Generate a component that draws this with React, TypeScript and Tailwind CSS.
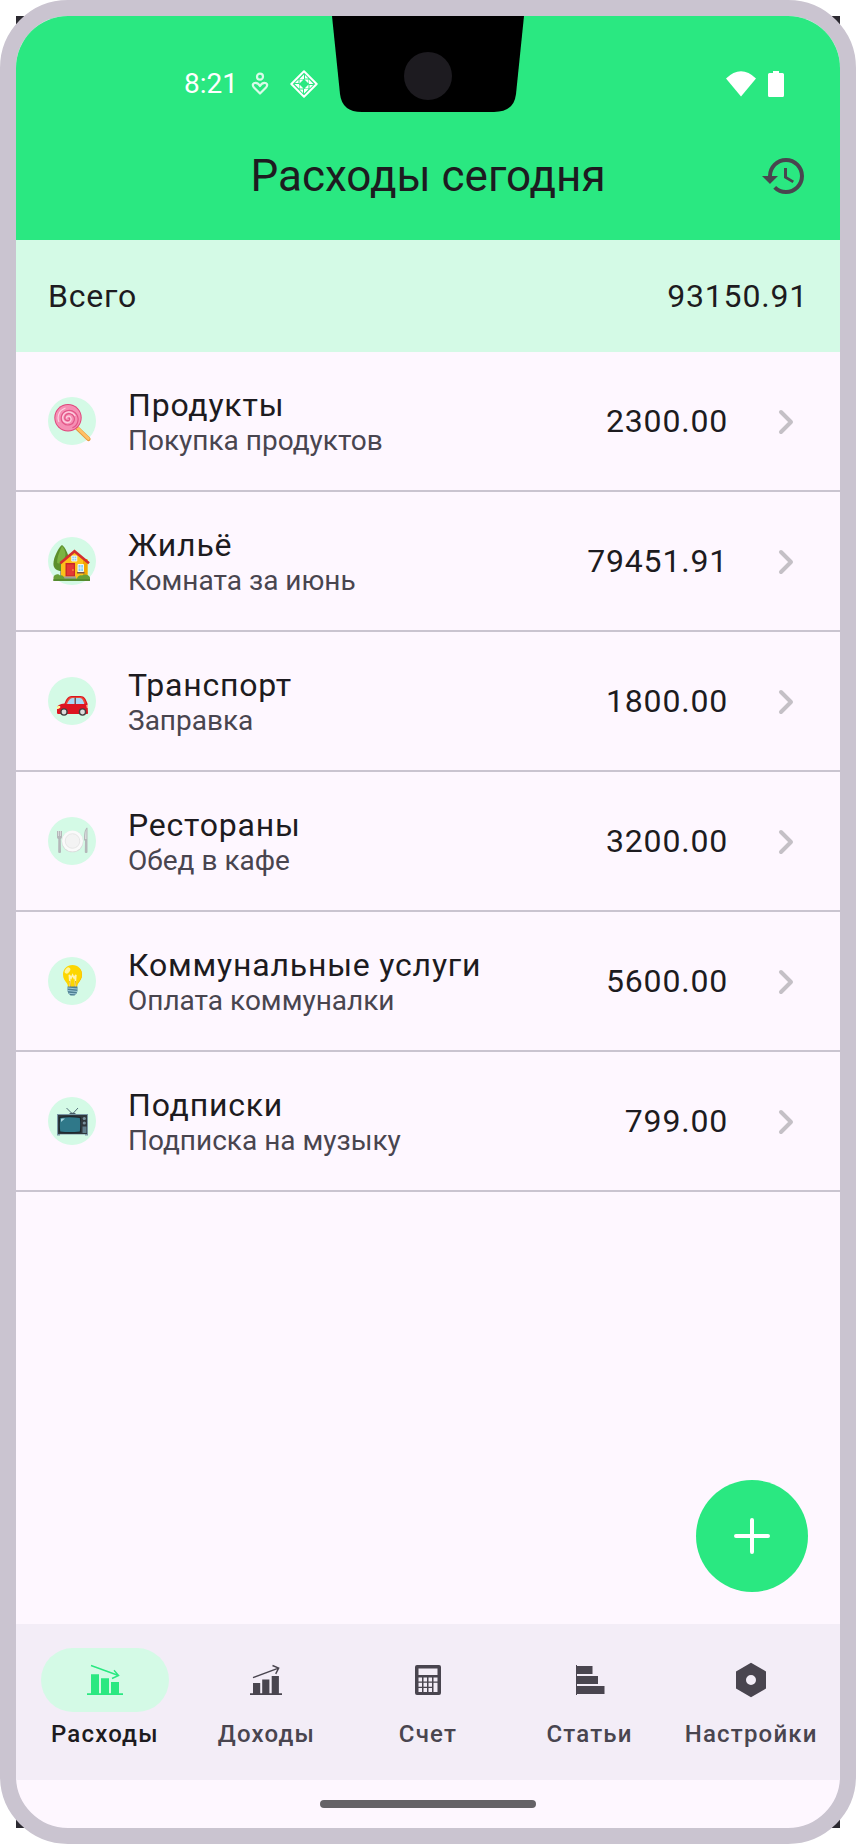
import type { ReactNode } from "react";
import { MdHistory } from "react-icons/md";

function Lollipop() {
  return (
    <svg viewBox="0 0 48 48" className="size-full">
      <path d="M29 31 40.500 42" stroke="#e59a3c" strokeWidth="4.200" strokeLinecap="round" />
      <path d="M29 30.600 40.300 41.500" stroke="#ffc166" strokeWidth="2.800" strokeLinecap="round" />
      <circle cx="20" cy="20.800" r="13.700" fill="#e0457b" />
      <circle cx="20" cy="20.800" r="12.700" fill="#f590b4" />
      <path
        d="M20.500 21.500c1.200-1.400 2 .8.600 1.700-2.600 1.400-5-.8-4.300-3.400.9-3.400 5.400-4.300 7.900-1.800 3.200 3.200 1.600 8.300-2.400 9.600-5.300 1.700-9.800-2.600-9-7.600 1-6.300 8.600-8.700 13.600-4.500 5.400 4.800 3.500 13-2.500 15.300"
        fill="none"
        stroke="#e25688"
        strokeWidth="1.200"
      />
      <path
        d="M18.500 21.500c-.6-2.200 2.600-3.200 4-1.300 1.900 2.600-.4 5.700-3.600 5.400-4-.4-5.500-5-3.100-8.200 3.100-4 9.400-2.800 11.400 1.700M11 25c-2.500-6 .5-12 6.500-14"
        fill="none"
        stroke="#fcd0e0"
        strokeWidth="1.200"
      />
    </svg>
  );
}

function House() {
  return (
    <svg viewBox="0 0 48 48" className="size-full">
      <path d="M12.500 29h2.500v13h-2.500z" fill="#5b4037" />
      <path d="M14 8c-3 2-8.600 12-8.600 19 0 4.500 3.600 7 8.100 7s8-3 8-8C21.500 19 17 9.500 14 8z" fill="#5c8f2c" />
      <path d="M14 9c-1.500 3-5.500 12-4.800 17 3 2 8-3 8.300-8.500C17.500 14 15.500 10.500 14 9z" fill="#7cb342" />
      <path d="M13 25 26.500 14 39.500 25v18H13z" fill="#fcc21b" />
      <path d="M35 22h4.500v21H35z" fill="#f2a600" />
      <path d="M12.300 26.300 26.500 14.200 41 26.300" fill="none" stroke="#d32f2f" strokeWidth="2.600" />
      <path d="M17.500 26h9.500v13.500h-9.500z" fill="#c62828" />
      <path d="M18.800 27.400h7v11h-7z" fill="#e53935" />
      <circle cx="25" cy="33" r=".7" fill="#ffd54f" />
      <path d="M23.800 19h5v5h-5zM30 27.500h5.500v7H30z" fill="#81d4fa" stroke="#f5f5f5" />
      <path d="M26.300 19v5m-2.500-2.500h5m4 6v7M30 31h5.500" stroke="#f5f5f5" strokeWidth=".7" />
      <path d="M29 35h7.500v1.500H29z" fill="#795548" />
      <path d="M16 39.500h12V43H16z" fill="#9e9e9e" />
      <path d="M5.500 44v-4c1-3 5-3.500 6.500-1.500 2-1 4 .5 4.500 3H29c.5-2.500 3-4 5-3 2.500-2 7-.5 8 2v3.500z" fill="#689f38" />
      <path d="M5.500 42H42v2H5.500z" fill="#558b2f" />
    </svg>
  );
}

function Car() {
  return (
    <svg viewBox="0 0 48 48" className="size-full">
      <path d="M9 36v-5c0-2.500 3-4 7.500-4.500C18 23 19.500 19 23.500 19h9c4 0 5.500 3.500 7 7.500l.5 9.500c0 .6-.5 1-1 1H11c-1.200 0-2-.3-2-1z" fill="#dd1421" />
      <path d="M17.500 27c1.500-4 3-7 6-7H33c2.500 0 4 3 5 6.500L29 27z" fill="#ed4b35" />
      <path d="M19 27c1.500-3.500 3-6 5.500-6h2v6zm9 0v-6h4c2 0 3.500 2.800 4.300 6z" fill="#a7d8f5" />
      <path d="M27.300 20.500V27" stroke="#4b5563" />
      <path d="M9 29.500c1.500-1 3-.8 3.500.5-.7 1.500-2 2-3.500 2z" fill="#fff59d" />
      <path d="M38.200 28H40v3h-1.200z" fill="#ffab91" />
      <circle cx="16" cy="35" r="3.800" fill="#424242" />
      <circle cx="16" cy="35" r="2.400" fill="#dcdcdc" />
      <circle cx="34.500" cy="35" r="3.800" fill="#424242" />
      <circle cx="34.500" cy="35" r="2.400" fill="#dcdcdc" />
    </svg>
  );
}

function Plate() {
  return (
    <svg viewBox="0 0 48 48" className="size-full">
      <circle cx="24.500" cy="24.500" r="10.800" fill="#d8dada" />
      <circle cx="24.500" cy="24" r="10.500" fill="#fafafa" />
      <circle cx="24.500" cy="24" r="7.300" fill="#f3f3f3" stroke="#e0e0e0" strokeWidth=".7" />
      <path d="M9 14h5v6c0 1.200-.7 1.700-1.200 2L13 35c0 1.300-2.800 1.300-2.800 0l.1-13c-.8-.3-1.300-.8-1.300-2z" fill="#b4b7b9" />
      <path d="M10.500 14v5m2-5v5" stroke="#e8e8e8" strokeWidth=".7" />
      <path d="M39 10.500c-2.500 2-3 6-3 12.500l1 1-.2 11c0 1.300 2.700 1.300 2.700 0V11z" fill="#b4b7b9" />
      <path d="M38.500 12c-1.200 2-1.500 6-1.500 10h1.500z" fill="#dadcdd" />
    </svg>
  );
}

function Bulb() {
  return (
    <svg viewBox="0 0 48 48" className="size-full">
      <path d="M24.500 8c5.500 0 9.500 4 9.500 9.500 0 4-1.800 6-3.300 8-1 1.300-1.500 2.700-1.700 4.500h-9c-.2-1.800-.7-3.200-1.700-4.500-1.500-2-3.300-4-3.300-8C15 12 19 8 24.500 8z" fill="#fdd600" />
      <path d="M31 11c4 5 2.500 9.500 0 13-1.300 1.800-2 3.500-2.500 6h.5c.2-1.800.7-3.200 1.700-4.500 1.500-2 3.300-4 3.300-8 0-2.700-1-5-3-6.500z" fill="#fbb900" />
      <ellipse cx="19.500" cy="13.500" rx="2.300" ry="3.500" transform="rotate(35 19.500 13.500)" fill="#fff59d" />
      <path d="m22.300 30-1-12 1.800 3 1.500-3 1.500 3 1.800-3-1 12" fill="none" stroke="#fff3b0" strokeWidth="1.600" />
      <path d="m22.500 30-.8-6m5 6 .8-6" stroke="#d99a00" strokeWidth=".8" />
      <path d="M19.500 29.500h10V34l-1 2.500-2 2h-4l-2-2-1-2.500z" fill="#4d7f93" />
      <path d="m19.500 31 10 1m-10 1.500 10 1m-8.500 1.800 7 .6" stroke="#a9d2e0" strokeWidth=".9" />
    </svg>
  );
}

function Television() {
  return (
    <svg viewBox="0 0 48 48" className="size-full">
      <path d="m18.500 11 6 6 5.500-6" fill="none" stroke="#546e7a" strokeWidth="1" />
      <path d="M21 17c.8-1.800 6.200-1.800 7 0z" fill="#455a64" />
      <path d="M9 17h31v21.500h-3v-1H12v1H9z" fill="#7a98a6" />
      <path d="M10 18h29v19H10z" fill="#30383d" />
      <path d="M11 20c7-1.300 14-1.300 22 0v15.500c-8 1-15 1-22 0z" fill="#1d282e" />
      <path d="M12.300 21c6-1 13-1 19.500 0 .6 4.500.6 9 0 13.500-6.500.8-13.500.8-19.500 0-.6-4.500-.6-9 0-13.500z" fill="#2f7889" />
      <path d="m13 25 4-3.500c-1.500-.2-3 0-4 .3z" fill="#a5d6df" />
      <circle cx="36.300" cy="21.500" r="1.600" fill="#78909c" />
      <circle cx="36.300" cy="26" r="1.600" fill="#78909c" />
      <path d="M34.500 29.500h4V36h-4z" fill="#607d8b" />
    </svg>
  );
}

type Expense = { title: string; note: string; amount: string; art: ReactNode };

const expenses: Expense[] = [
  { title: "Продукты", note: "Покупка продуктов", amount: "2300.00", art: <Lollipop /> },
  { title: "Жильё", note: "Комната за июнь", amount: "79451.91", art: <House /> },
  { title: "Транспорт", note: "Заправка", amount: "1800.00", art: <Car /> },
  { title: "Рестораны", note: "Обед в кафе", amount: "3200.00", art: <Plate /> },
  { title: "Коммунальные услуги", note: "Оплата коммуналки", amount: "5600.00", art: <Bulb /> },
  { title: "Подписки", note: "Подписка на музыку", amount: "799.00", art: <Television /> },
];

function DownTrend() {
  return (
    <svg viewBox="0 0 48 48" className="size-12" fill="currentColor">
      <path d="M10 18.300h8V38h-8zM20 22.300h8V38h-8zM30 26h8v12h-8zM6 37.200h36V39H6z" />
      <path d="m10 9.500 27.500 10M33 14.200l4.600 5.300-6.600 3" fill="none" stroke="currentColor" strokeWidth="1.400" />
    </svg>
  );
}

function UpTrend() {
  return (
    <svg viewBox="0 0 48 48" className="size-12" fill="currentColor">
      <path d="M11 27h7.200v11H11zM20.200 23.500h7.200V38h-7.200zM29.700 20h7.200v18h-7.200zM8 37.300h32V39H8z" />
      <path d="m11 21.700 25.500-9.500M30.500 9.500l6.200 2.600-3 5.700" fill="none" stroke="currentColor" strokeWidth="1.400" />
    </svg>
  );
}

function Calculator() {
  return (
    <svg viewBox="0 0 48 48" className="size-12" fill="currentColor" fillRule="evenodd">
      <path d="M13 9h22a2 2 0 0 1 2 2v26a2 2 0 0 1-2 2H13a2 2 0 0 1-2-2V11a2 2 0 0 1 2-2zm1.500 3.500v6.500h19v-6.500zm0 9v4H18v-4zm5 0v4H23v-4zm5 0v4H28v-4zm5 0v4h4v-4zm-15 5.200v4H18v-4zm5 0v4H23v-4zm5 0v4H28v-4zm5 0v9.300h4v-9.300zm-15 5.300v4H18v-4zm5 0v4H23v-4zm5 0v4H28v-4z" />
    </svg>
  );
}

function Bars() {
  return (
    <svg viewBox="0 0 48 48" className="size-12" fill="currentColor">
      <path d="M10 9h1v30h-1zM11 10h15.500v8H11zM11 20h21v8H11zM11 30h27.500v8H11z" />
    </svg>
  );
}

function Nut() {
  return (
    <svg viewBox="0 0 48 48" className="size-12" fill="currentColor" fillRule="evenodd">
      <path d="m24 6.800 15 8.600v17.200l-15 8.600-15-8.600V15.400zM24 19a5 5 0 1 0 0 10 5 5 0 0 0 0-10z" />
    </svg>
  );
}

const tabs = [
  { label: "Расходы", icon: <DownTrend />, active: true },
  { label: "Доходы", icon: <UpTrend />, active: false },
  { label: "Счет", icon: <Calculator />, active: false },
  { label: "Статьи", icon: <Bars />, active: false },
  { label: "Настройки", icon: <Nut />, active: false },
];

function StatusBar() {
  return (
    <div className="relative flex h-24 items-center justify-between pt-10 pr-14 pl-42 text-white">
      <div className="flex items-center">
        <span className="text-[28px] leading-8">8:21</span>
        <svg viewBox="0 0 20 24" className="ml-3 h-6 w-5" fill="none" stroke="#d9fbe8" strokeWidth="2.200">
          <circle cx="10" cy="4.700" r="3" />
          <path d="M10 21.500 4 15.500C1.500 12.500 3.500 10.800 5.500 10.800 7.500 10.800 9 12 10 14 11 12 12.500 10.800 14.500 10.800 16.500 10.800 18.500 12.500 16 15.500z" strokeLinejoin="round" />
        </svg>
        <svg viewBox="0 0 28 28" className="ml-5 size-7" fill="none">
          <path d="m14 1.300 12.700 12.700L14 26.700 1.300 14z" stroke="white" strokeWidth="2" strokeLinejoin="round" />
          <path
            d="M14 4.500V9H9.500zM23.500 14H19V9.500zM14 23.500V19h4.500zM4.500 14H9v4.500zM9.500 9.500h4l-4 4zM18.500 9.500v4l-4-4zM18.500 18.500h-4l4-4zM9.500 18.500v-4l4 4zM15 8.500V5l3.500 3.500zM19.500 15h3.500l-3.500 3.500zM13 19.500v3.500l-3.500-3.500zM8.500 13H5l3.500-3.500z"
            fill="white"
          />
        </svg>
      </div>
      <svg viewBox="0 0 192 96" className="absolute top-0 left-1/2 h-24 w-48 -translate-x-1/2">
        <path d="M0 0h192l-8 78q-2 18-22 18H30Q10 96 8 78z" fill="#000" />
        <circle cx="96" cy="60" r="24" fill="#1d1b20" />
      </svg>
      <div className="flex items-center gap-3">
        <svg viewBox="0 0 30 26" className="h-[26px] w-[30px]" fill="currentColor">
          <path d="M0 7.500Q15-7 30 7.500L15 25.500z" />
        </svg>
        <svg viewBox="0 0 16 26" className="h-[26px] w-4" fill="currentColor">
          <path d="M5 0h6v2h3.500Q16 2 16 3.500v21q0 1.500-1.500 1.500h-13Q0 26 0 24.500v-21Q0 2 1.500 2H5z" />
        </svg>
      </div>
    </div>
  );
}

export default function App() {
  return (
    <div className="relative isolate min-h-screen bg-white font-[Roboto,sans-serif] text-[#1d1b20]">
      <div className="absolute inset-4 -z-10 bg-[#2b2930]" />
      <div className="flex min-h-screen flex-col overflow-hidden rounded-[68px] border-16 border-[#cac4d0] bg-[#fef7ff]">
        <header className="bg-[#2ae881]">
          <StatusBar />
          <div className="grid h-32 grid-cols-[48px_1fr_48px] items-center px-8">
            <h1 className="col-start-2 text-center text-[44px] leading-14">Расходы сегодня</h1>
            <button type="button" aria-label="История" className="text-[#49454f]">
              <MdHistory className="size-12" />
            </button>
          </div>
        </header>

        <main className="relative flex-1">
          <div className="flex h-28 items-center justify-between bg-[#d4fae6] px-8 text-[32px] leading-10 tracking-wide">
            <span>Всего</span>
            <span>93150.91</span>
          </div>
          <ul>
            {expenses.map((e) => (
              <li key={e.title} className="border-b-2 border-[#cac4d0]">
                <a href="#" className="flex h-[138px] items-center gap-8 px-8">
                  <span className="size-12 rounded-full bg-[#d4fae6]">{e.art}</span>
                  <span className="flex flex-1 flex-col">
                    <span className="text-[32px] leading-10 tracking-wide">{e.title}</span>
                    <span className="text-[28px] leading-8 text-[#49454f]">{e.note}</span>
                  </span>
                  <span className="text-[32px] leading-10 tracking-wide">{e.amount}</span>
                  <svg viewBox="0 0 48 48" className="size-12" fill="none" stroke="#c4c0c6" strokeWidth="4" strokeLinecap="round" strokeLinejoin="round">
                    <path d="m21 15 10 10-10 10" />
                  </svg>
                </a>
              </li>
            ))}
          </ul>
          <button
            type="button"
            aria-label="Добавить расход"
            className="absolute right-8 bottom-8 grid size-28 place-items-center rounded-full bg-[#2ae881]"
          >
            <svg viewBox="0 0 36 36" className="size-9" stroke="white" strokeWidth="4" strokeLinecap="round">
              <path d="M18 2v32M2 18h32" />
            </svg>
          </button>
        </main>

        <nav className="flex h-39 bg-[#f3edf7] px-2 pt-6">
          {tabs.map((t) => (
            <a
              key={t.label}
              href="#"
              aria-current={t.active ? "page" : undefined}
              className={`flex flex-1 basis-0 flex-col items-center gap-2 ${t.active ? "text-[#1d1b20]" : "text-[#49454f]"}`}
            >
              <span className={`grid h-16 w-32 place-items-center rounded-full ${t.active ? "bg-[#d4fae6] text-[#2ae881]" : ""}`}>
                {t.icon}
              </span>
              <span className="text-2xl leading-7 font-medium tracking-wider">{t.label}</span>
            </a>
          ))}
        </nav>
        <div className="grid h-12 place-items-center">
          <div className="h-2 w-54 rounded-full bg-[#656267]" />
        </div>
      </div>
    </div>
  );
}
